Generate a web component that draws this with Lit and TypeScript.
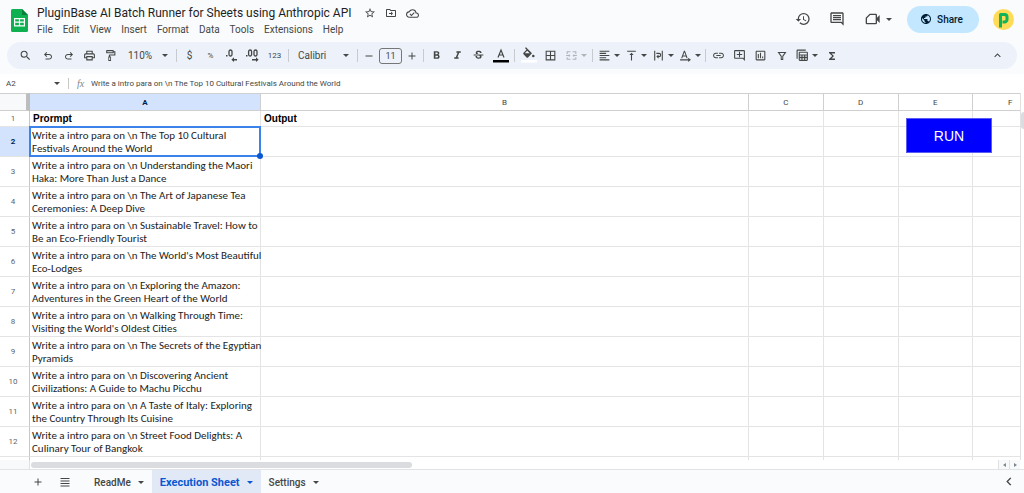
import { LitElement, html, svg, css, nothing, type TemplateResult } from "lit";
import { customElement, property, state } from "lit/decorators.js";
import { classMap } from "lit/directives/class-map.js";

const ICONS: Record<string, string> = {
  search:
    "M15.5 14h-.79l-.28-.27A6.47 6.47 0 0 0 16 9.5 6.5 6.5 0 1 0 9.500 16c1.610 0 3.090-.590 4.230-1.570l.270.280v.790l5 4.990L20.490 19l-4.990-5zm-6 0C7.010 14 5 11.990 5 9.500S7.010 5 9.500 5 14 7.010 14 9.500 11.990 14 9.500 14z",
  undo: "M7 19v-2h7.100q1.575 0 2.737-1T18 13.500 16.838 11 14.100 10H7.800l2.600 2.600L9 14 4 9l5-5 1.400 1.400L7.800 8h6.300q2.425 0 4.163 1.575T20 13.500t-1.737 3.925T14.100 19H7z",
  redo: "M9.900 19q-2.425 0-4.163-1.575T4 13.500t1.737-3.925T9.900 8h6.300l-2.600-2.600L15 4l5 5-5 5-1.400-1.400 2.600-2.600H9.900q-1.575 0-2.737 1T6 13.500 7.163 16 9.900 17H17v2H9.900z",
  print:
    "M19 8h-1V3H6v5H5c-1.660 0-3 1.340-3 3v6h4v4h12v-4h4v-6c0-1.660-1.340-3-3-3zM8 5h8v3H8V5zm8 12v2H8v-4h8v2zm2-2v-2H6v2H4v-4c0-.550.450-1 1-1h14c.550 0 1 .450 1 1v4h-2z",
  paint:
    "M18 4V3c0-.550-.450-1-1-1H5c-.550 0-1 .450-1 1v4c0 .550.450 1 1 1h12c.550 0 1-.450 1-1V6h1v4H10c-.550 0-1 .450-1 1v3H8v8h5v-8h-2v-2h10V4h-3zm-2 2H6V4h10v2zm-4.500 14.500h-2v-5h2z",
  plus: "M19 13h-6v6h-2v-6H5v-2h6V5h2v6h6v2z",
  minus: "M19 13H5v-2h14v2z",
  bold: "M15.600 10.790c.970-.670 1.650-1.770 1.650-2.790 0-2.260-1.750-4-4-4H7v14h7.040c2.090 0 3.710-1.700 3.710-3.790 0-1.520-.860-2.820-2.150-3.420zM10 6.500h3c.830 0 1.500.670 1.500 1.500s-.670 1.500-1.500 1.500h-3v-3zm3.500 9H10v-3h3.500c.830 0 1.500.670 1.500 1.500s-.670 1.500-1.500 1.500z",
  italic: "M10 4v3h2.210l-3.420 8H6v3h8v-3h-2.210l3.420-8H18V4z",
  strike:
    "M7.240 8.750c-.260-.480-.390-1.030-.390-1.670 0-.610.130-1.160.400-1.670.260-.500.630-.930 1.110-1.290.480-.350 1.050-.630 1.700-.830.660-.190 1.390-.290 2.180-.290.810 0 1.540.110 2.210.340.660.220 1.230.540 1.690.940.470.400.830.880 1.080 1.430s.380 1.150.380 1.810h-3.010c0-.310-.050-.590-.150-.850-.090-.270-.240-.490-.440-.680-.200-.190-.450-.330-.750-.440-.300-.100-.660-.160-1.060-.160-.390 0-.740.040-1.030.130s-.530.210-.720.360c-.190.160-.340.340-.440.550-.100.210-.150.430-.150.660 0 .480.250.880.740 1.210.380.250.770.480 1.410.700H7.390c-.050-.080-.110-.170-.150-.250zM21 12v-2H3v2h9.620c.180.070.400.140.550.200.370.170.660.340.870.510s.350.360.430.570c.070.200.110.430.110.690 0 .230-.050.450-.140.660-.090.200-.230.380-.420.530-.190.150-.420.260-.710.350-.290.080-.630.130-1.010.130-.430 0-.830-.040-1.180-.130s-.660-.230-.910-.420c-.250-.190-.450-.440-.590-.750s-.250-.760-.250-1.210H6.400c0 .550.080 1.130.240 1.580s.370.850.650 1.210c.280.350.600.660.980.920.370.260.780.480 1.220.650.440.170.900.300 1.380.390.480.080.960.130 1.440.130.800 0 1.530-.090 2.180-.280s1.210-.450 1.670-.790c.460-.340.820-.770 1.070-1.270s.380-1.070.380-1.710c0-.600-.100-1.140-.310-1.610-.050-.110-.110-.230-.170-.330H21z",
  borders: "M3 3v18h18V3H3zm8 16H5v-6h6v6zm0-8H5V5h6v6zm8 8h-6v-6h6v6zm0-8h-6V5h6v6z",
  merge:
    "M3 4h7v2H5v3H3V4zm11 0h7v5h-2V6h-5V4zM3 15h2v3h5v2H3v-5zm16 0h2v5h-7v-2h5v-3zM2 11h5V9l3 3-3 3v-2H2v-2zm20 0v2h-5v2l-3-3 3-3v2h5z",
  alignLeft: "M15 15H3v2h12v-2zm0-8H3v2h12V7zM3 13h18v-2H3v2zm0 8h18v-2H3v2zM3 3v2h18V3H3z",
  alignTop: "M8 11h3v10h2V11h3l-4-4-4 4zM4 3v2h16V3H4z",
  wrap: "M4 3h2v18H4V3zm14 0h2v18h-2V3zM8 7h5a4 4 0 0 1 0 8h-1v3l-4-4 4-4v3h1a2 2 0 0 0 0-4H8V7z",
  rotate:
    "M4 17h2l1.200-3.200h5.600L14 17h2L11 3H9L4 17zm3.800-5L10 5.800 12.200 12H7.800zM2 19h15v-3l5 4-5 4v-3H2v-2z",
  link: "M3.900 12c0-1.710 1.390-3.100 3.100-3.100h4V7H7c-2.760 0-5 2.240-5 5s2.240 5 5 5h4v-1.900H7c-1.710 0-3.100-1.390-3.100-3.100zM8 13h8v-2H8v2zm9-6h-4v1.900h4c1.710 0 3.100 1.390 3.100 3.100s-1.390 3.100-3.100 3.100h-4V17h4c2.760 0 5-2.240 5-5s-2.240-5-5-5z",
  addComment:
    "M22 4c0-1.100-.9-2-2-2H4c-1.100 0-2 .9-2 2v12c0 1.100.9 2 2 2h14l4 4V4zm-2 13.170L18.830 16H4V4h16v13.170zM13 5h-2v4H7v2h4v4h2v-4h4V9h-4V5z",
  chart:
    "M19 3H5c-1.100 0-2 .9-2 2v14c0 1.100.9 2 2 2h14c1.100 0 2-.9 2-2V5c0-1.100-.9-2-2-2zm0 16H5V5h14v14zM7 9h2v8H7V9zm4-2h2v10h-2V7zm4 7h2v3h-2v-3z",
  filter: "M3 4h18l-6.500 9v7h-5v-7L3 4zm4.100 2 4.400 6v6h1v-6l4.400-6H7.100z",
  tables:
    "M1 3a2 2 0 0 1 2-2h15v2H3v15H1V3zm4 4a2 2 0 0 1 2-2h13a2 2 0 0 1 2 2v13a2 2 0 0 1-2 2H7a2 2 0 0 1-2-2V7zm2 0v3h13V7H7zm0 5v2.500h3V12H7zm5 0v2.500h3V12h-3zm5 0v2.500h3V12h-3zM7 17v3h3v-3H7zm5 0v3h3v-3h-3zm5 0v3h3v-3h-3z",
  sigma: "M18 4H6v2l6.500 6L6 18v2h12v-3h-7l5-5-5-5h7V4z",
  up: "M12 8l-6 6 1.410 1.410L12 10.830l4.590 4.580L18 14l-6-6z",
  left: "M16 5l-7 7 7 7-2.500 1.800L5 12l8.500-8.800z",
  list: "M3 4h18v2H3V4zm0 5h18v2H3V9zm0 5h18v2H3v-2zm0 5h18v2H3v-2z",
  star: "M22 9.240l-7.190-.620L12 2 9.190 8.630 2 9.240l5.460 4.730L5.820 21 12 17.270 18.180 21l-1.630-7.030L22 9.240zM12 15.400l-3.760 2.270 1-4.280-3.320-2.880 4.380-.380L12 6.100l1.710 4.040 4.380.380-3.320 2.880 1 4.280L12 15.400z",
  move: "M20 6h-8l-2-2H4c-1.100 0-2 .9-2 2v12c0 1.100.9 2 2 2h16c1.100 0 2-.9 2-2V8c0-1.100-.9-2-2-2zm0 12H4V6h5.170l2 2H20v10zm-8-1 4-4-4-4v3H8v2h4v3z",
  cloud:
    "M19.350 10.040A7.490 7.490 0 0 0 12 4C9.110 4 6.600 5.640 5.350 8.040A5.994 5.994 0 0 0 0 14c0 3.310 2.690 6 6 6h13c2.760 0 5-2.240 5-5 0-2.640-2.050-4.780-4.650-4.960zM19 18H6c-2.210 0-4-1.790-4-4 0-2.050 1.530-3.760 3.560-3.970l1.070-.110.500-.950A5.469 5.469 0 0 1 12 6c2.620 0 4.880 1.860 5.390 4.430l.300 1.500 1.530.110A2.980 2.980 0 0 1 22 15c0 1.650-1.350 3-3 3zm-9-3.820-2.090-2.090L6.500 13.500 10 17l6.010-6.010-1.410-1.410z",
  history:
    "M13 3a9 9 0 0 0-9 9H1l3.890 3.890.070.140L9 12H6c0-3.870 3.130-7 7-7s7 3.130 7 7-3.130 7-7 7c-1.930 0-3.680-.790-4.940-2.060l-1.420 1.420A8.954 8.954 0 0 0 13 21a9 9 0 0 0 0-18zm-1 5v5l4.280 2.540.720-1.210-3.500-2.080V8H12z",
  comments:
    "M21.990 4c0-1.100-.890-2-1.990-2H4c-1.100 0-2 .9-2 2v12c0 1.100.9 2 2 2h14l4 4-.010-18zM20 4v13.170L18.830 16H4V4h16zM6 12h12v2H6zm0-3h12v2H6zm0-3h12v2H6z",
  camera: "M7 4h9a2 2 0 0 1 2 2v4l4-4v12l-4-4v4a2 2 0 0 1-2 2H3a2 2 0 0 1-2-2v-8l6-6zm.800 2L3 10.800V18h13V6H7.800z",
  globe:
    "M12 2C6.480 2 2 6.480 2 12s4.480 10 10 10 10-4.480 10-10S17.520 2 12 2zm-1 17.930c-3.950-.490-7-3.850-7-7.930 0-.620.080-1.210.210-1.790L9 15v1c0 1.100.9 2 2 2v1.930zm6.900-2.540c-.260-.810-1-1.390-1.900-1.390h-1v-3c0-.550-.450-1-1-1H8v-2h2c.550 0 1-.450 1-1V7h2c1.100 0 2-.9 2-2v-.410c2.930 1.190 5 4.060 5 7.410 0 2.080-.8 3.970-2.100 5.390z",
};

const icon = (name: string, size: number) => html`<svg
  class="icon"
  width=${size}
  height=${size}
  viewBox="0 0 24 24"
  aria-hidden="true"
>
  ${svg`<path d=${ICONS[name]}></path>`}
</svg>`;

const caret = () => html`<svg class="caret" width="6" height="3" viewBox="0 0 6 3" aria-hidden="true">
  <path d="M0 0h6L3 3z"></path>
</svg>`;

const MENUS = ["File", "Edit", "View", "Insert", "Format", "Data", "Tools", "Extensions", "Help"];

const COLUMNS = ["A", "B", "C", "D", "E", "F"];

const PROMPTS: [string, string][] = [
  ["The Top 10 Cultural", "Festivals Around the World"],
  ["Understanding the Maori", "Haka: More Than Just a Dance"],
  ["The Art of Japanese Tea", "Ceremonies: A Deep Dive"],
  ["Sustainable Travel: How to", "Be an Eco-Friendly Tourist"],
  ["The World's Most Beautiful", "Eco-Lodges"],
  ["Exploring the Amazon:", "Adventures in the Green Heart of the World"],
  ["Walking Through Time:", "Visiting the World's Oldest Cities"],
  ["The Secrets of the Egyptian", "Pyramids"],
  ["Discovering Ancient", "Civilizations: A Guide to Machu Picchu"],
  ["A Taste of Italy: Exploring", "the Country Through Its Cuisine"],
  ["Street Food Delights: A", "Culinary Tour of Bangkok"],
];

const base = css`
  :host {
    display: block;
    font-family: Roboto, "Liberation Sans", sans-serif;
    color: #444746;
  }
  * {
    box-sizing: border-box;
  }
  button,
  input,
  select {
    font: inherit;
    color: inherit;
    border: 0;
    padding: 0;
    margin: 0;
    background: none;
  }
  button {
    display: flex;
    align-items: center;
    justify-content: center;
    white-space: nowrap;
  }
  .icon,
  .caret {
    fill: currentColor;
    display: block;
    flex: none;
  }
`;

@customElement("sheet-header")
export class SheetHeader extends LitElement {
  static styles = [
    base,
    css`
      .header {
        display: flex;
        align-items: center;
        height: 42px;
        padding: 0 10px 4px 11px;
      }
      .logo {
        flex: none;
        margin: 2px 9px 0 0;
      }
      .names {
        flex: 1;
        min-width: 0;
      }
      .title-row {
        display: flex;
        align-items: center;
        gap: 9px;
        height: 18px;
        margin-top: 2px;
      }
      .title {
        margin: 0 3px 0 0;
        font-size: 12px;
        font-weight: 400;
        white-space: nowrap;
        color: #1f1f1f;
      }
      .menus {
        display: flex;
        gap: 10px;
        height: 14px;
        font-size: 10px;
      }
      .actions {
        display: flex;
        align-items: center;
      }
      .history {
        margin-right: 18px;
      }
      .comments {
        margin-right: 20px;
      }
      .meet {
        gap: 5px;
        margin-right: 15px;
      }
      .share {
        gap: 5px;
        width: 72px;
        height: 27px;
        padding-right: 3px;
        border-radius: 14px;
        background: #c2e7ff;
        color: #001d35;
        font-size: 10px;
        font-weight: 500;
        margin-right: 14px;
      }
    `,
  ];

  render() {
    return html`<header class="header">
      <svg class="logo" width="17" height="23" viewBox="0 0 17 23" aria-hidden="true">
        <path fill="#0fb050" d="M1.500 0H11l6 6v15.500a1.500 1.500 0 0 1-1.500 1.500h-14A1.500 1.500 0 0 1 0 21.500v-20A1.500 1.500 0 0 1 1.500 0z"></path>
        <path fill="#078038" d="M11 0l6 6h-6z"></path>
        <path fill="#fff" d="M3 9h11v8.500H3zM4.200 10.200v2.400h3.700v-2.400zm4.900 0v2.400h3.700v-2.400zM4.200 13.800v2.500h3.700v-2.500zm4.900 0v2.500h3.700v-2.500z" fill-rule="evenodd"></path>
      </svg>
      <div class="names">
        <div class="title-row">
          <h1 class="title">PluginBase AI Batch Runner for Sheets using Anthropic API</h1>
          <button aria-label="Star">${icon("star", 12)}</button>
          <button aria-label="Move">${icon("move", 12)}</button>
          <button aria-label="Document status">${icon("cloud", 13)}</button>
        </div>
        <nav class="menus">${MENUS.map((m) => html`<button>${m}</button>`)}</nav>
      </div>
      <div class="actions">
        <button class="history" aria-label="Version history">${icon("history", 16)}</button>
        <button class="comments" aria-label="Comments">${icon("comments", 16)}</button>
        <button class="meet" aria-label="Join a call">${icon("camera", 16)}${caret()}</button>
        <button class="share">${icon("globe", 12)}Share</button>
        <svg width="21" height="21" viewBox="0 0 21 21" role="img" aria-label="Account">
          <circle cx="10.500" cy="10.500" r="10.500" fill="#ffdb57"></circle>
          <path fill="none" stroke="#0fb45a" stroke-width="3" stroke-linejoin="round" d="M7.500 18.500V5.500h4a2.500 2.500 0 0 1 2.500 2.500v2.500a2.500 2.500 0 0 1-2.500 2.500H9.500"></path>
        </svg>
      </div>
    </header>`;
  }
}

@customElement("sheet-toolbar")
export class SheetToolbar extends LitElement {
  static styles = [
    base,
    css`
      .bar {
        display: flex;
        align-items: center;
        height: 27px;
        margin: 0 7px;
        padding: 0 9px 0 7px;
        border-radius: 14px;
        background: #edf2fa;
        font-size: 10px;
        overflow: hidden;
      }
      .tool {
        flex: none;
        width: 21px;
        height: 21px;
      }
      .wide {
        width: 23px;
      }
      .slim {
        width: 18px;
      }
      .drop {
        flex: none;
        width: 27px;
        height: 21px;
        gap: 3px;
      }
      .roomy {
        width: 29px;
      }
      .off {
        color: #b0b4b9;
      }
      .small {
        font-size: 8px;
      }
      .sep {
        flex: none;
        width: 1px;
        height: 13px;
        margin: 0 2px;
        background: #c7cbd1;
      }
      .pick {
        display: flex;
        align-items: center;
        flex: none;
        padding: 0 6px 0 7px;
      }
      .pick select {
        appearance: none;
        flex: 1;
        min-width: 0;
        font-size: 10px;
      }
      .zoom {
        width: 53px;
      }
      .font {
        width: 64px;
      }
      .size {
        flex: none;
        width: 23px;
        height: 16px;
        margin: 0 1px;
        border: 1px solid #747775;
        border-radius: 3px;
        text-align: center;
        font-size: 9px;
      }
      .fill {
        fill: currentColor;
      }
      .spacer {
        flex: 1;
      }
    `,
  ];

  private tool(label: string, body: TemplateResult | string, size = "") {
    return html`<button
      class=${classMap({ tool: true, wide: size === "wide", slim: size === "slim" })}
      aria-label=${label}
    >
      ${body}
    </button>`;
  }

  private drop(label: string, name: string, roomy = false, off = false) {
    return html`<button class=${classMap({ drop: true, roomy, off })} aria-label=${label}>
      ${icon(name, 13)}${caret()}
    </button>`;
  }

  private decimals(more: boolean) {
    return html`<svg width="14" height="14" viewBox="0 0 14 14" class="fill" aria-hidden="true">
      <rect x=${more ? 0 : 1} y="6" width="1.500" height="1.500"></rect>
      <rect x=${more ? 2.6 : 4} y="1" width="3" height="6" rx="1.500" fill="none" stroke="currentColor" stroke-width="1.300"></rect>
      ${more
        ? svg`<rect x="8" y="1" width="3" height="6" rx="1.500" fill="none" stroke="currentColor" stroke-width="1.300"></rect>
            <path d="M6 10h4V8.300l2.600 2.400L10 13v-1.600H6z"></path>`
        : svg`<path d="M12 10H9V8.300l-2.600 2.400L9 13v-1.600h3z"></path>`}
    </svg>`;
  }

  render() {
    const sep = html`<span class="sep"></span>`;
    return html`<div class="bar" role="toolbar" aria-label="Main">
      ${this.tool("Search the menus", icon("search", 13), "wide")}
      ${this.tool("Undo", icon("undo", 12))}
      ${this.tool("Redo", icon("redo", 12))}
      ${this.tool("Print", icon("print", 13))}
      ${this.tool("Paint format", icon("paint", 13))}
      <label class="pick zoom">
        <select aria-label="Zoom">
          <option>110%</option>
        </select>
        ${caret()}
      </label>
      ${sep}
      ${this.tool("Format as currency", "$")}
      ${this.tool("Format as percent", html`<span class="small">%</span>`)}
      ${this.tool("Decrease decimal places", this.decimals(false))}
      ${this.tool("Increase decimal places", this.decimals(true))}
      ${this.tool("More formats", html`<span class="small">123</span>`, "wide")}
      ${sep}
      <label class="pick font">
        <select aria-label="Font">
          <option>Calibri</option>
        </select>
        ${caret()}
      </label>
      ${sep}
      ${this.tool("Decrease font size", icon("minus", 12), "slim")}
      <input class="size" aria-label="Font size" value="11" />
      ${this.tool("Increase font size", icon("plus", 12), "slim")}
      ${sep}
      ${this.tool("Bold", icon("bold", 13))}
      ${this.tool("Italic", icon("italic", 13))}
      ${this.tool("Strikethrough", icon("strike", 13))}
      ${this.tool(
        "Text color",
        html`<svg width="16" height="16" viewBox="0 0 16 16" aria-hidden="true">
          <path fill="none" stroke="#444746" stroke-width="1.200" d="M5 9.500 8 2l3 7.500M6 7h4"></path>
          <path d="M0 12h16v2.500H0z" fill="#000"></path>
        </svg>`,
        "wide"
      )}
      ${sep}
      ${this.tool(
        "Fill color",
        html`<svg width="16" height="18" viewBox="0 0 16 18" aria-hidden="true">
          <path fill="#444746" d="M4 1l1-.800 6 6-4 4.200q-.700.600-1.400 0L2.500 7.200q-.600-.700 0-1.400l3-3zm2.200 2.700L3.800 6.300h5z"></path>
          <circle cx="12.300" cy="9" r="1.300" fill="#444746"></circle>
          <path d="M0 13h16v2.500H0z" fill="#fff"></path>
        </svg>`,
        "wide"
      )}
      ${this.tool("Borders", icon("borders", 13))}
      ${this.drop("Merge cells", "merge", true, true)}
      ${sep}
      ${this.drop("Horizontal align", "alignLeft")}
      ${this.drop("Vertical align", "alignTop")}
      ${this.drop("Text wrapping", "wrap")}
      ${this.drop("Text rotation", "rotate")}
      ${sep}
      ${this.tool("Insert link", icon("link", 13))}
      ${this.tool("Insert comment", icon("addComment", 13))}
      ${this.tool("Insert chart", icon("chart", 13))}
      ${this.tool("Create a filter", icon("filter", 12))}
      ${this.drop("Filter views", "tables", true)}
      ${this.tool("Functions", icon("sigma", 12))}
      <span class="spacer"></span>
      ${this.tool("Hide the menus", icon("up", 13))}
    </div>`;
  }
}

@customElement("formula-bar")
export class FormulaBar extends LitElement {
  @property() cell = "";
  @property() value = "";

  static styles = [
    base,
    css`
      .bar {
        display: flex;
        align-items: center;
        height: 19px;
        padding-left: 6px;
        background: #fff;
        font-size: 8px;
      }
      .name {
        width: 48px;
      }
      .divider {
        width: 1px;
        height: 11px;
        margin: 0 8px;
        background: #c7c7c7;
      }
      .fx {
        width: 14px;
        font: italic 10px "Liberation Serif", serif;
        color: #80868b;
      }
      .formula {
        flex: 1;
        min-width: 0;
      }
    `,
  ];

  render() {
    return html`<div class="bar">
      <input class="name" aria-label="Name box" .value=${this.cell} />
      ${caret()}
      <span class="divider"></span>
      <label class="fx" for="formula">fx</label>
      <input class="formula" id="formula" .value=${this.value} />
    </div>`;
  }
}

@customElement("sheet-grid")
export class SheetGrid extends LitElement {
  static styles = [
    base,
    css`
      :host {
        flex: 1;
        min-height: 0;
        display: flex;
        flex-direction: column;
        background: #fff;
      }
      .body {
        flex: 1;
        min-height: 0;
        display: flex;
      }
      .view {
        position: relative;
        flex: 1;
        min-width: 0;
        overflow: hidden;
      }
      .table {
        table-layout: fixed;
        width: 1048px;
        border-collapse: separate;
        border-spacing: 0;
      }
      .c-num {
        width: 30px;
      }
      .c-a {
        width: 231px;
      }
      .c-b {
        width: 488px;
      }
      th,
      td {
        padding: 0;
        border: 0 solid #e4e4e4;
        border-width: 0 1px 1px 0;
        overflow: hidden;
      }
      .col,
      .corner {
        height: 18px;
        border-color: #cfcfcf;
        border-top-width: 1px;
        font-size: 8px;
        font-weight: 400;
      }
      .corner {
        background: #f8f9fa;
        border-right: 4px solid #bdbdbd;
      }
      .num {
        padding-right: 3px;
        border-right-color: #c7c7c7;
        font-size: 8px;
        font-weight: 400;
        color: #5f6368;
      }
      .col.on,
      .num.on {
        background: #d3e3fd;
        color: #041e49;
        font-weight: 700;
      }
      .head {
        height: 16px;
        padding: 0 3px;
        font: bold 10px/15px "Liberation Sans", Arial, sans-serif;
        color: #000;
        vertical-align: middle;
      }
      .cell {
        position: relative;
        height: 30px;
        padding: 0 0 0 2px;
        font: 11px/13px Carlito, Calibri, Lato, sans-serif;
        color: #222;
        vertical-align: middle;
        white-space: nowrap;
        overflow: visible;
      }
      .cell.on::before {
        content: "";
        position: absolute;
        inset: -1px -1px -1px -1px;
        border: 2px solid #3b82ea;
      }
      .cell.on::after {
        content: "";
        position: absolute;
        right: -3px;
        bottom: -3px;
        width: 6px;
        height: 6px;
        border-radius: 50%;
        background: #0b57d0;
        z-index: 1;
      }
      .run {
        position: absolute;
        left: 906px;
        top: 25px;
        width: 86px;
        height: 35px;
        border: 1px solid #5b5bf5;
        background: #00f;
        color: #fff;
        font: 14px "Liberation Sans", Arial, sans-serif;
      }
      .vscroll {
        display: flex;
        flex-direction: column;
        width: 4px;
        border-left: 1px solid #e1e1e1;
        background: #fff;
      }
      .vthumb {
        height: 17px;
        margin-top: 19px;
        border-radius: 4px 0 0 4px;
        background: #dadce0;
      }
      .hscroll {
        display: flex;
        align-items: center;
        height: 10px;
        border-bottom: 1px solid #e1e3e6;
      }
      .hstart {
        width: 30px;
        height: 9px;
        background: #f8f9fa;
        border-right: 1px solid #e1e1e1;
      }
      .htrack {
        flex: 1;
        padding-left: 1px;
      }
      .hthumb {
        width: 39.4%;
        height: 6px;
        border-radius: 3px;
        background: #dadce0;
      }
      .arrow {
        width: 11px;
        height: 9px;
        border-left: 1px solid #e1e1e1;
        background: #f8f9fa;
        color: #80868b;
      }
      .end {
        width: 4px;
      }
    `,
  ];

  private cells(count: number) {
    return Array.from({ length: count }, () => html`<td></td>`);
  }

  render() {
    return html`<div class="body">
        <div class="view">
          <table class="table">
            <colgroup>
              <col class="c-num" />
              <col class="c-a" />
              <col class="c-b" />
              <col span="4" />
            </colgroup>
            <thead>
              <tr>
                <td class="corner"></td>
                ${COLUMNS.map((c) => html`<th scope="col" class=${classMap({ col: true, on: c === "A" })}>${c}</th>`)}
              </tr>
            </thead>
            <tbody>
              <tr>
                <th scope="row" class="num">1</th>
                <td class="head">Prormpt</td>
                <td class="head">Output</td>
                ${this.cells(4)}
              </tr>
              ${PROMPTS.map(
                ([first, second], i) => html`<tr>
                  <th scope="row" class=${classMap({ num: true, on: i === 0 })}>${i + 2}</th>
                  <td class=${classMap({ cell: true, on: i === 0 })}>Write a intro para on \\n ${first}<br />${second}</td>
                  ${this.cells(5)}
                </tr>`
              )}
              <tr>
                <th class="num"></th>
                <td class="cell"></td>
                ${this.cells(5)}
              </tr>
            </tbody>
          </table>
          <button class="run">RUN</button>
        </div>
        <div class="vscroll"><div class="vthumb"></div></div>
      </div>
      <div class="hscroll">
        <div class="hstart"></div>
        <div class="htrack"><div class="hthumb"></div></div>
        <button class="arrow" aria-label="Scroll left">
          <svg class="icon" width="3" height="4" viewBox="0 0 3 4"><path d="M3 0v4L0 2z"></path></svg>
        </button>
        <button class="arrow" aria-label="Scroll right">
          <svg class="icon" width="3" height="4" viewBox="0 0 3 4"><path d="M0 0v4l3-2z"></path></svg>
        </button>
        <div class="end"></div>
      </div>`;
  }
}

@customElement("sheet-tabs")
export class SheetTabs extends LitElement {
  @state() private active = "Execution Sheet";

  static styles = [
    base,
    css`
      .bar {
        display: flex;
        align-items: center;
        height: 23px;
        padding: 0 9px 0 24px;
        font-size: 10px;
        font-weight: 500;
      }
      .tool {
        width: 27px;
        height: 23px;
      }
      .tabs {
        display: flex;
        flex: 1;
        height: 23px;
        margin-left: 8px;
      }
      .tab {
        gap: 7px;
        padding: 1px 8px 0;
      }
      .tab.on {
        background: #e1e9f7;
        color: #0b57d0;
        font-size: 11px;
        font-weight: 700;
      }
    `,
  ];

  render() {
    return html`<footer class="bar">
      <button class="tool" aria-label="Add sheet">${icon("plus", 12)}</button>
      <button class="tool" aria-label="All sheets">${icon("list", 12)}</button>
      <div class="tabs">
        ${["ReadMe", "Execution Sheet", "Settings"].map(
          (t) => html`<button
            class=${classMap({ tab: true, on: t === this.active })}
            aria-current=${t === this.active ? "true" : nothing}
            @click=${() => (this.active = t)}
          >
            ${t}${caret()}
          </button>`
        )}
      </div>
      <button aria-label="Show side panel">${icon("left", 11)}</button>
    </footer>`;
  }
}

@customElement("app-root")
export class AppRoot extends LitElement {
  static styles = css`
    :host {
      display: flex;
      flex-direction: column;
      height: 100vh;
      background: #f9fbfd;
      overflow: hidden;
    }
    .formula {
      margin-top: 5px;
    }
  `;

  render() {
    return html`
      <sheet-header></sheet-header>
      <sheet-toolbar></sheet-toolbar>
      <formula-bar
        class="formula"
        cell="A2"
        value="Write a intro para on \\n The Top 10 Cultural Festivals Around the World"
      ></formula-bar>
      <sheet-grid></sheet-grid>
      <sheet-tabs></sheet-tabs>
    `;
  }
}
